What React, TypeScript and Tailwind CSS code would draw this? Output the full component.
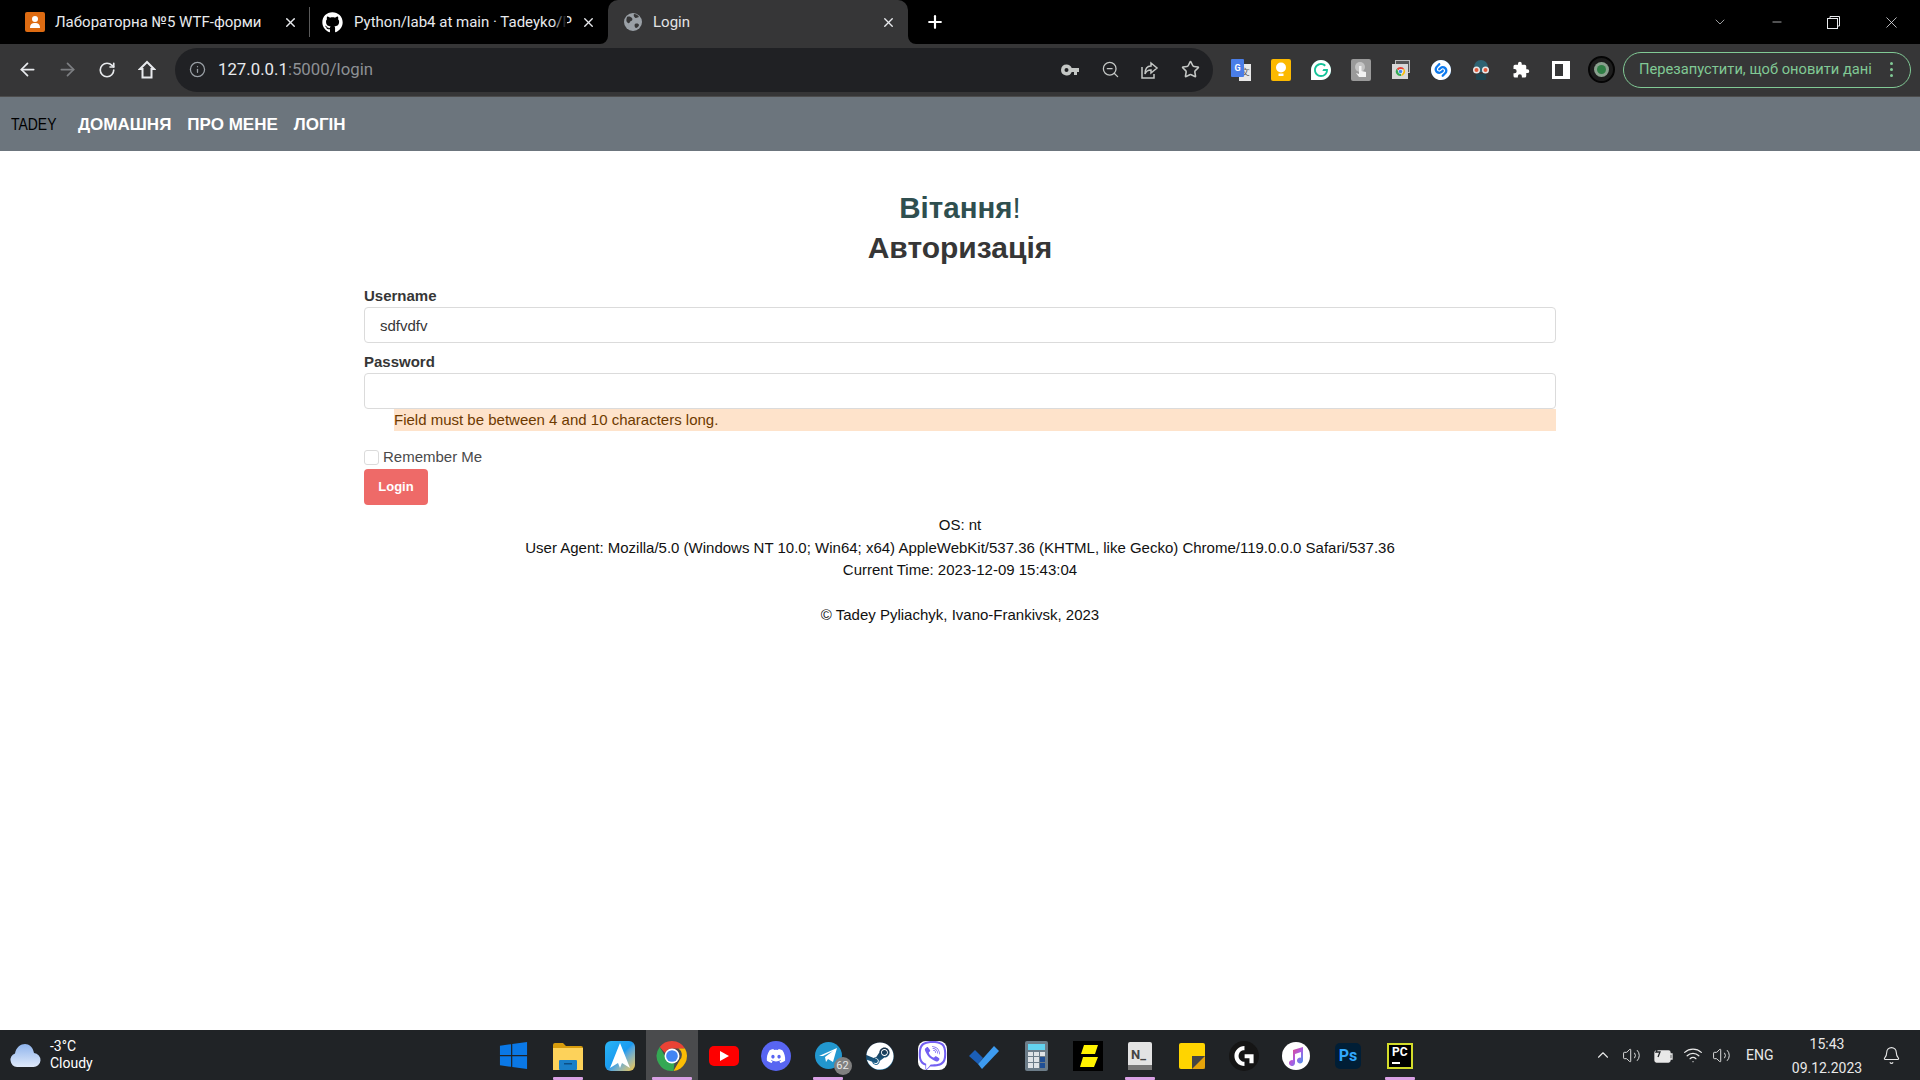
import { ArrowLeft, ArrowRight, ChevronDown, ChevronUp, Bell, Info, Minus, Plus, RotateCw, Star, Volume2, Wifi, X, ZoomOut } from "lucide-react";
import { FaDiscord, FaGithub, FaSteam, FaViber, FaWindows } from "react-icons/fa";
import { SiGrammarly, SiLogitechg, SiShazam } from "react-icons/si";
import type { ReactNode } from "react";

const uiFont = "font-['Roboto',sans-serif]";

function ChromeLogo({ size = 30 }: { size?: number }) {
  return (
    <svg width={size} height={size} viewBox="0 0 48 48">
      <path d="M24 4a20 20 0 0 1 17.3 10H24a10 10 0 0 0-9.2 6L7.6 12A20 20 0 0 1 24 4z" fill="#ea4335" />
      <path d="M41.3 14A20 20 0 0 1 26 43.9L34.6 29a10 10 0 0 0-2-15z" fill="#fbbc04" />
      <path d="M26 43.9A20 20 0 0 1 7.6 12l8.7 15a10 10 0 0 0 11 6z" fill="#34a853" />
      <circle cx="24" cy="24" r="10" fill="#fff" />
      <circle cx="24" cy="24" r="7.8" fill="#4285f4" />
    </svg>
  );
}

function Tab({ icon, title, box, iconBox, active, fade }: { icon: ReactNode; title: string; box: string; iconBox: string; active?: boolean; fade?: boolean }) {
  return (
    <div className={`relative flex h-[44px] items-center ${box} ${active ? "rounded-t-[10px] bg-[#363637]" : ""}`}>
      {active && (
        <>
          <svg className="absolute bottom-0 left-[-8px]" width="8" height="8" viewBox="0 0 8 8"><path d="M8 0v8H0a8 8 0 0 0 8-8z" fill="#363637" /></svg>
          <svg className="absolute bottom-0 right-[-8px]" width="8" height="8" viewBox="0 0 8 8"><path d="M0 0v8h8a8 8 0 0 1-8-8z" fill="#363637" /></svg>
        </>
      )}
      <div className={`flex shrink-0 items-center ${iconBox}`}>{icon}</div>
      <span className={`relative min-w-0 flex-1 whitespace-nowrap text-[15px] ${active ? "text-[#e3e4e6]" : "text-[#e8eaed]"}`}>
        {title}
        {fade && <span className="absolute inset-y-0 right-0 w-[14px] bg-gradient-to-r from-transparent to-black" />}
      </span>
      <X size={15} strokeWidth={2.2} className="ml-[14px] shrink-0 text-[#e8eaed]" />
    </div>
  );
}

function TabStrip() {
  return (
    <div className={`flex h-[44px] items-center bg-black ${uiFont}`}>
      <Tab
        box="w-[309px] pl-[25px] pr-[11px]"
        iconBox="w-[30px]"
        title="Лабораторна №5 WTF-форми"
        icon={
          <div className="flex h-[20px] w-[20px] items-center justify-center rounded-[2px] bg-[#dd6b12]">
            <svg width="12" height="14" viewBox="0 0 12 14"><circle cx="6" cy="4" r="3" fill="#fff" /><path d="M1 13c0-4 2-5 5-5s5 1 5 5z" fill="#fff" /></svg>
          </div>
        }
      />
      <div className="h-[30px] w-px bg-[#5a5a5a]" />
      <Tab box="w-[290px] pl-[12px] pr-[4px]" iconBox="w-[32px]" fade title="Python/lab4 at main · Tadeyko/P" icon={<FaGithub size={21} className="text-white" />} />
      <div className="w-[8px]" />
      <Tab
        active
        box="w-[300px] pl-[16px] pr-[12px]"
        iconBox="w-[29px]"
        title="Login"
        icon={
          <svg width="18" height="18" viewBox="0 0 18 18">
            <circle cx="9" cy="9" r="9" fill="#9aa0a6" />
            <path d="M3 4c2-1 4 0 5 1s0 3-1 3-1 3-3 2-2-3-1-6zM11 11c2-1 4 0 4 1s-2 3-3 3-2-3-1-4zM10 1c2 0 4 1 5 3l-3 1c-1 0-3-2-2-4z" fill="#363637" />
          </svg>
        }
      />
      <div className="flex w-[54px] justify-center">
        <Plus size={20} strokeWidth={2.6} className="text-white" />
      </div>
      <div className="flex flex-1 items-center justify-end text-[#e8eaed]">
        <div className="flex w-[57px] justify-center"><ChevronDown size={16} strokeWidth={1} /></div>
        <div className="flex w-[57px] justify-center"><Minus size={14} strokeWidth={1.2} /></div>
        <div className="flex w-[57px] justify-center">
          <svg width="13" height="13" viewBox="0 0 13 13" fill="none" stroke="currentColor"><rect x=".5" y="2.5" width="10" height="10" /><path d="M3 2.5V.5h9.5V10h-2" /></svg>
        </div>
        <div className="flex w-[58px] justify-center"><X size={19} strokeWidth={1} /></div>
      </div>
    </div>
  );
}

function Extension({ children }: { children: ReactNode }) {
  return <div className="flex w-[40px] items-center justify-center">{children}</div>;
}

function Extensions() {
  return (
    <div className="ml-[8px] flex items-center">
      <Extension>
        <div className="relative h-[22px] w-[20px]">
          <div className="absolute bottom-0 right-0 h-[17px] w-[12px] bg-[#e8e8e8] text-center text-[9px] leading-[17px] text-[#555]">文</div>
          <div className="absolute left-0 top-0 h-[18px] w-[13px] rounded-[1px] bg-[#4a7ee8] text-center text-[9px] font-bold leading-[18px] text-white">G</div>
        </div>
      </Extension>
      <Extension>
        <div className="flex h-[22px] w-[20px] items-center justify-center rounded-[2px] bg-[#fcb900]">
          <svg width="12" height="15" viewBox="0 0 12 15"><circle cx="6" cy="5.5" r="5" fill="#fff" /><rect x="3.5" y="11.5" width="5" height="2.5" fill="#fff" /></svg>
        </div>
      </Extension>
      <Extension>
        <div className="flex h-[20px] w-[20px] items-center justify-center rounded-full bg-[#15c39a]">
          <SiGrammarly size={20} className="text-white" />
        </div>
      </Extension>
      <Extension>
        <div className="flex h-[22px] w-[20px] items-center justify-center rounded-[2px] bg-[#9a9a9a]">
          <svg width="14" height="18" viewBox="0 0 14 18"><circle cx="6" cy="6" r="5" fill="#c4c4c4" /><path d="M5 5h2.500v5l4.500 1v5H5l-3-4 3 1z" fill="#f2f2f2" /></svg>
        </div>
      </Extension>
      <Extension>
        <div className="relative h-[19px] w-[18px]">
          <div className="absolute right-0 top-0 h-[13px] w-[15px] border border-[#bbb] bg-[#555]" />
          <div className="absolute bottom-0 left-0 flex h-[15px] w-[16px] items-center justify-center bg-[#d8d8d8]"><ChromeLogo size={11} /></div>
        </div>
      </Extension>
      <Extension>
        <div className="flex h-[20px] w-[20px] items-center justify-center rounded-full bg-[#0e7bf0]">
          <SiShazam size={20} className="text-white" />
        </div>
      </Extension>
      <Extension>
        <svg width="20" height="24" viewBox="0 0 20 24">
          <path d="M3 9a7 7 0 0 1 14 0v5H3z" fill="#2d6373" />
          <circle cx="5.500" cy="12" r="3.500" fill="#e8e8e8" /><circle cx="14.500" cy="12" r="3.500" fill="#e8e8e8" />
          <circle cx="5.500" cy="12" r="2" fill="#e25a3c" /><circle cx="14.500" cy="12" r="2" fill="#e25a3c" />
          <rect x="5" y="16" width="10" height="6" rx="1" fill="#1e4450" />
        </svg>
      </Extension>
      <Extension>
        <svg width="18" height="18" viewBox="0 0 24 24" fill="#fff"><path d="M20.500 11H19V7a2 2 0 0 0-2-2h-4V3.500a2.500 2.500 0 0 0-5 0V5H4a2 2 0 0 0-2 2v3.800h1.500a2.700 2.700 0 0 1 0 5.400H2V20a2 2 0 0 0 2 2h3.800v-1.500a2.700 2.700 0 0 1 5.400 0V22H17a2 2 0 0 0 2-2v-4h1.500a2.500 2.500 0 0 0 0-5z" /></svg>
      </Extension>
      <Extension>
        <div className="h-[18px] w-[18px] border-[3px] border-r-[7px] border-white" />
      </Extension>
      <Extension>
        <div className="flex h-[27px] w-[27px] items-center justify-center rounded-full border-[2px] border-[#050505] bg-[#1d1d1d]">
          <div className="flex h-[15px] w-[15px] items-center justify-center rounded-full bg-[#8aa08e]">
            <div className="h-[9px] w-[9px] rounded-full bg-[#2f7f45]" />
          </div>
        </div>
      </Extension>
    </div>
  );
}

function Toolbar() {
  return (
    <div className={`flex h-[53px] items-center border-b border-[#4c4c4c] bg-[#363637] pb-px ${uiFont}`}>
      <div className="flex w-[175px] shrink-0 items-center pl-[7px]">
        <div className="flex w-[40px] justify-center text-[#e8eaed]"><ArrowLeft size={21} strokeWidth={2} /></div>
        <div className="flex w-[40px] justify-center text-[#7c7e81]"><ArrowRight size={21} strokeWidth={2} /></div>
        <div className="flex w-[40px] justify-center text-[#e8eaed]"><RotateCw size={18} strokeWidth={2.2} /></div>
        <div className="flex w-[40px] justify-center text-[#e8eaed]">
          <svg width="18" height="19" viewBox="0 0 18 19" fill="none" stroke="currentColor" strokeWidth="2"><path d="M9 2 2 9h2.500v8.500h9V9H16z" /></svg>
        </div>
      </div>
      <div className="flex h-[44px] w-[1038px] items-center rounded-full bg-[#202124] pl-[14px] pr-[3px]">
        <Info size={17} strokeWidth={1.8} className="text-[#9aa0a6]" />
        <span className="ml-[12px] flex-1 text-[16.800px] text-[#e8eaed]">127.0.0.1<span className="text-[#8d9094]">:5000/login</span></span>
        <div className="flex items-center text-[#c4c7c5]">
          <div className="flex w-[40px] justify-center">
            <svg width="18" height="12" viewBox="0 0 18 12" fill="currentColor"><path fillRule="evenodd" d="M5.500 0.500A5.500 5.500 0 0 1 10.700 4H18v4h-2v3h-3V8h-2.300A5.500 5.500 0 1 1 5.500.5zm0 3.500a2 2 0 1 0 0 4 2 2 0 0 0 0-4z" /></svg>
          </div>
          <div className="flex w-[40px] justify-center"><ZoomOut size={19} strokeWidth={1.6} /></div>
          <div className="flex w-[40px] justify-center">
            <svg width="20" height="20" viewBox="0 0 20 20" fill="none" stroke="currentColor" strokeWidth="1.500"><path d="M2 7v11h12v-4M11 3l6 5-6 5v-3c-3 0-5 1-6 4 0-5 2-8 6-8z" /></svg>
          </div>
          <div className="flex w-[40px] justify-center"><Star size={19} strokeWidth={2} /></div>
        </div>
      </div>
      <Extensions />
      <div className="ml-[2px] flex h-[36px] w-[288px] items-center rounded-full border border-[#81c995] pl-[15px] pr-[17px] text-[14.700px] text-[#81c995]">
        <span className="flex-1 whitespace-nowrap">Перезапустити, щоб оновити дані</span>
        <div className="flex flex-col gap-[3px]">
          <div className="h-[3px] w-[3px] rounded-full bg-[#81c995]" />
          <div className="h-[3px] w-[3px] rounded-full bg-[#81c995]" />
          <div className="h-[3px] w-[3px] rounded-full bg-[#81c995]" />
        </div>
      </div>
    </div>
  );
}

function SiteNav() {
  return (
    <nav className="flex h-[54px] items-center gap-4 bg-[#6c757d] pl-[11px] pt-px font-['Liberation_Sans',sans-serif] text-[17px]">
      <span className="w-[51px] origin-left scale-x-[0.82] text-black">TADEY</span>
      <a className="font-bold text-white">ДОМАШНЯ</a>
      <a className="font-bold text-white">ПРО МЕНЕ</a>
      <a className="font-bold text-white">ЛОГІН</a>
    </nav>
  );
}

function LoginPage() {
  return (
    <main className="flex-1 bg-white font-['Liberation_Sans',sans-serif] text-[15px]">
      <div className="mx-auto w-[1192px] pt-[37px]">
        <h1 className="text-center text-[29.500px] font-bold leading-[40px] text-[#2f4f4f]">Вітання<span className="font-normal">!</span></h1>
        <h2 className="text-center text-[30px] font-bold leading-[40px] text-[#363636]">Авторизація</h2>

        <label className="mt-[17px] block h-[22px] font-bold leading-[22px] text-[#363636]">Username</label>
        <input readOnly value="sdfvdfv" className="block h-[36px] w-full rounded-[4px] border border-[#dbdbdb] px-[15px] text-[15px] text-[#363636] outline-none" />

        <label className="mt-[8px] block h-[22px] font-bold leading-[22px] text-[#363636]">Password</label>
        <input readOnly type="password" className="block h-[36px] w-full rounded-[4px] border border-[#dbdbdb] px-[15px] outline-none" />
        <div className="ml-[30px] h-[22px] bg-[#fee3cb] leading-[22px] text-[#6d3a00]">Field must be between 4 and 10 characters long.</div>

        <div className="mt-[15px] flex h-[22px] items-center">
          <div className="h-[15px] w-[15px] rounded-[3px] border border-[#dbdbdb]" />
          <span className="ml-[4px] text-[#4a4a4a]">Remember Me</span>
        </div>
        <button className="mt-px h-[36px] w-[64px] rounded-[4px] bg-[#ee6a68] text-[13px] font-bold text-white">Login</button>

        <div className="mt-[9px] text-center leading-[22.500px] text-[#111]">
          <p>OS: nt</p>
          <p>User Agent: Mozilla/5.0 (Windows NT 10.0; Win64; x64) AppleWebKit/537.36 (KHTML, like Gecko) Chrome/119.0.0.0 Safari/537.36</p>
          <p>Current Time: 2023-12-09 15:43:04</p>
          <p className="mt-[22.500px]">© Tadey Pyliachyk, Ivano-Frankivsk, 2023</p>
        </div>
      </div>
    </main>
  );
}

function TaskIcon({ children, open, active }: { children: ReactNode; open?: boolean; active?: boolean }) {
  return (
    <div className={`relative flex h-[50px] w-[52px] items-center justify-center pt-[1px] ${active ? "bg-[#4a4b4d]" : ""}`}>
      {children}
      {open && <div className={`absolute bottom-0 h-[3px] rounded-[1px] bg-[#d9a0e4] ${active ? "w-[40px]" : "w-[30px]"}`} />}
    </div>
  );
}

function Taskbar() {
  return (
    <div className={`flex h-[50px] items-center bg-[#202326] text-white ${uiFont}`}>
      <div className="flex w-[487px] shrink-0 items-center pl-[9px]">
        <svg width="32" height="26" viewBox="0 0 32 26">
          <defs>
            <linearGradient id="cloud" x1="0" y1="0" x2="0" y2="1"><stop offset="0" stopColor="#8fb4ec" /><stop offset="1" stopColor="#dfe9fa" /></linearGradient>
          </defs>
          <path d="M8 25a7 7 0 0 1-2-13.500C7 5 12 2 16 2s8 3 9 9a7 7 0 0 1-1 14z" fill="url(#cloud)" />
        </svg>
        <div className="ml-[9px] text-[14px] leading-[17px]">
          <div>-3°C</div>
          <div>Cloudy</div>
        </div>
      </div>

      <div className="flex">
        <div className="mr-[3px]"><TaskIcon><FaWindows size={31} className="text-[#0a78e6]" /></TaskIcon></div>
        <TaskIcon open>
          <svg width="30" height="28" viewBox="0 0 30 28">
            <path d="M0 3a2 2 0 0 1 2-2h8l3 3h15a2 2 0 0 1 2 2v22H0z" fill="#d89c0c" />
            <rect y="6" width="30" height="22" fill="#fdd25a" />
            <rect x="6" y="18" width="18" height="10" rx="1" fill="#1a7fc8" />
            <rect x="11" y="21" width="8" height="1.500" fill="#0c4f85" />
          </svg>
        </TaskIcon>
        <TaskIcon>
          <div className="flex h-[30px] w-[30px] items-center justify-center rounded-[6px] bg-gradient-to-br from-[#2bb5f5] via-[#1a9bf0] to-[#f6c516]">
            <svg width="20" height="26" viewBox="0 0 20 26"><path d="M10 0 20 25l-8-5-2 5-2-5-8 5z" fill="#fff" /></svg>
          </div>
        </TaskIcon>
        <TaskIcon open active><ChromeLogo size={36} /></TaskIcon>
        <TaskIcon>
          <div className="flex h-[20px] w-[30px] items-center justify-center rounded-[5px] bg-[#fe0000]">
            <svg width="9" height="10" viewBox="0 0 9 10"><path d="M0 0l9 5-9 5z" fill="#fff" /></svg>
          </div>
        </TaskIcon>
        <TaskIcon>
          <div className="flex h-[30px] w-[30px] items-center justify-center rounded-full bg-[#5865f2]"><FaDiscord size={20} className="text-white" /></div>
        </TaskIcon>
        <TaskIcon open>
          <div className="relative flex h-[27px] w-[27px] items-center justify-center rounded-full bg-[#2297cf]">
            <svg width="18" height="16" viewBox="0 0 18 16"><path d="M0 8 18 0l-4 14-5-3-2 3-1-5 8-6-10 5z" fill="#fff" /></svg>
            <div className="absolute bottom-[-6px] right-[-10px] flex h-[18px] w-[18px] items-center justify-center rounded-full bg-[#808080] text-[11px] text-[#e8e8e8]">62</div>
          </div>
        </TaskIcon>
        <TaskIcon>
          <div className="flex h-[28px] w-[28px] items-center justify-center rounded-full bg-gradient-to-b from-[#111d2e] to-[#1579ae]"><FaSteam size={28} className="text-white" /></div>
        </TaskIcon>
        <TaskIcon><FaViber size={29} className="rounded-[8px] bg-white text-[#7360f2]" /></TaskIcon>
        <TaskIcon>
          <svg width="30" height="26" viewBox="0 0 30 26">
            <path d="M0 13 6 7l8 8-5 6z" fill="#1b5fb8" />
            <path d="M9 21 25 3l5 5-17 18z" fill="#3d9bf0" />
          </svg>
        </TaskIcon>
        <TaskIcon>
          <div className="flex h-[30px] w-[23px] flex-col gap-[2px] rounded-[2px] bg-[#6c7c88] p-[3px]">
            <div className="h-[6px] bg-[#63d3f0]" />
            <div className="grid flex-1 grid-cols-3 gap-[1px]">
              <div className="bg-[#dfe3e6]" /><div className="bg-[#dfe3e6]" /><div className="bg-[#dfe3e6]" />
              <div className="bg-[#dfe3e6]" /><div className="bg-[#dfe3e6]" /><div className="bg-[#1f4f95]" />
              <div className="bg-[#dfe3e6]" /><div className="bg-[#dfe3e6]" /><div className="bg-[#1f4f95]" />
            </div>
          </div>
        </TaskIcon>
        <TaskIcon>
          <div className="flex h-[30px] w-[30px] items-center justify-center bg-black">
            <svg width="20" height="22" viewBox="0 0 20 22"><path d="M6 0h14l-3 9H3zM5 12h15l-4 10H2z" fill="#fff200" /></svg>
          </div>
        </TaskIcon>
        <TaskIcon open>
          <div className="flex h-[28px] w-[24px] flex-col rounded-[2px] bg-[#e3e3e3] pt-[6px]">
            <div className="flex-1 pl-[3px] text-[13px] font-bold leading-[13px] text-[#444]">N_</div>
            <div className="h-[5px] bg-[#777]" />
          </div>
        </TaskIcon>
        <TaskIcon>
          <div className="relative h-[26px] w-[26px] overflow-hidden rounded-[2px] bg-[#ffd400]">
            <div className="absolute bottom-0 right-0 h-[13px] w-[13px] bg-[#444]" />
            <svg className="absolute bottom-0 right-0" width="13" height="13" viewBox="0 0 13 13"><path d="M13 0 0 13h13z" fill="#e5a30a" /></svg>
          </div>
        </TaskIcon>
        <TaskIcon>
          <div className="flex h-[30px] w-[30px] items-center justify-center rounded-full bg-[#151515]"><SiLogitechg size={20} className="text-white" /></div>
        </TaskIcon>
        <TaskIcon>
          <div className="flex h-[28px] w-[28px] items-center justify-center rounded-full bg-white">
            <svg width="20" height="20" viewBox="0 0 20 20">
              <defs>
                <linearGradient id="note" x1="0" y1="0" x2="1" y2="1"><stop offset="0" stopColor="#f5455c" /><stop offset="0.5" stopColor="#b05ae0" /><stop offset="1" stopColor="#3aa0ee" /></linearGradient>
              </defs>
              <path d="M7 4 17 1v13.500a3 3 0 1 1-2-2.800V6L9 8v9a3 3 0 1 1-2-2.800z" fill="url(#note)" />
            </svg>
          </div>
        </TaskIcon>
        <TaskIcon>
          <div className="flex h-[26px] w-[26px] items-center justify-center rounded-[5px] bg-[#001e36] text-[16px] font-bold text-[#31a8ff]">Ps</div>
        </TaskIcon>
        <TaskIcon open>
          <div className="flex h-[26px] w-[26px] flex-col border-[2px] border-[#d3dc2a] bg-black pl-[3px] text-[12px] font-bold leading-[14px] text-white">
            <span>PC</span>
            <div className="mt-[3px] h-[2px] w-[8px] bg-white" />
          </div>
        </TaskIcon>
      </div>

      <div className="ml-[162px] flex items-center text-[#e8e8e8]">
        <div className="flex w-[29px] justify-center"><ChevronUp size={18} strokeWidth={1.5} /></div>
        <div className="flex w-[29px] justify-center"><Volume2 size={19} strokeWidth={1.200} /></div>
        <div className="ml-[3px] flex w-[29px] justify-center">
          <svg width="21" height="18" viewBox="0 0 21 18" fill="none" stroke="currentColor" strokeWidth="1.300"><rect x="2" y="5" width="15" height="11" rx="1.500" fill="#e8e8e8" /><path d="M17 8h2v5h-2" /><path d="M6 0 3 6h4l-2 5" stroke="#202326" /></svg>
        </div>
        <div className="flex w-[29px] justify-center"><Wifi size={20} strokeWidth={1.500} /></div>
        <div className="flex w-[29px] justify-center"><Volume2 size={19} strokeWidth={1.200} /></div>
        <span className="ml-[10px] w-[32px] text-[14px]">ENG</span>
        <div className="ml-[9px] w-[80px] pt-px text-center text-[14px] leading-[24px]">
          <div>15:43</div>
          <div>09.12.2023</div>
        </div>
        <div className="ml-[15px]"><Bell size={19} strokeWidth={1.4} /></div>
      </div>
    </div>
  );
}

export default function App() {
  return (
    <div className="flex h-screen flex-col overflow-hidden">
      <TabStrip />
      <Toolbar />
      <SiteNav />
      <LoginPage />
      <Taskbar />
    </div>
  );
}
